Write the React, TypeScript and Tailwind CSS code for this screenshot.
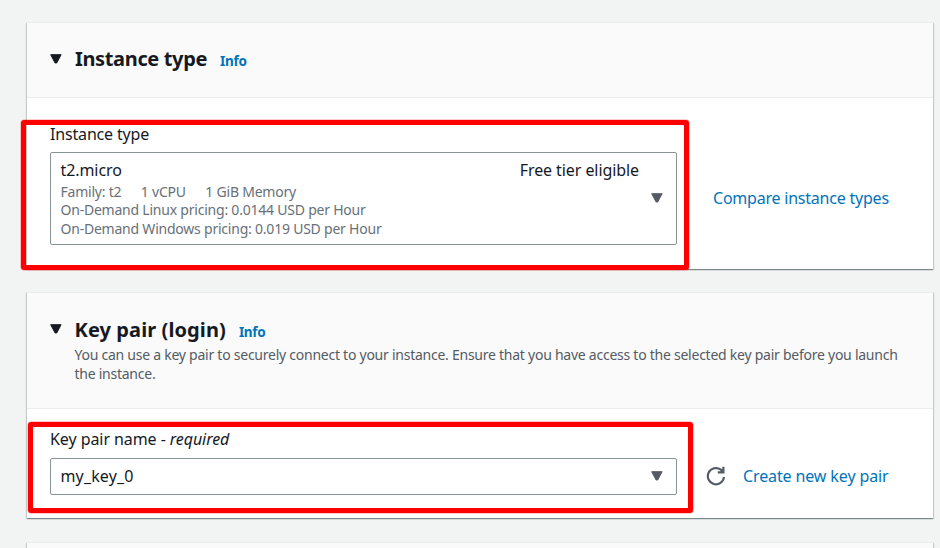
import React from "react";

const Caret = ({ className = "" }: { className?: string }) => (
  <svg viewBox="0 0 12 10" className={`h-[10px] w-[12px] shrink-0 ${className}`}>
    <path d="M0.7 0.7h10.4L6.7 9H5.1z" fill="currentColor" stroke="currentColor" strokeWidth="1" strokeLinejoin="round" />
  </svg>
);

const Info = ({ className = "" }: { className?: string }) => (
  <a className={`text-[13.5px] leading-5 font-bold tracking-[-0.3px] text-[#0073bb] ${className}`}>Info</a>
);

const card = "border-t border-[#eaeded] bg-white shadow-[0_1px_1px_0_rgba(0,28,36,0.3),1px_1px_1px_0_rgba(0,28,36,0.15),-1px_1px_1px_0_rgba(0,28,36,0.15)]";

const marker = "absolute rounded-[3px] border-[5px] border-[#ff0000] shadow-[0_0_0_0.5px_rgba(255,0,0,0.4)]";

export default function App() {
  return (
    <div className="relative h-[548px] w-[940px] overflow-hidden bg-[#f2f3f3] pt-[22px] pr-[7px] pl-[27px] font-['Noto_Sans',sans-serif] text-[16px] leading-[22px] text-[#16191f]">
      <section className={`h-[247px] ${card}`}>
        <header className="flex h-[75px] items-center border-b border-[#eaeded] bg-[#fafafa] pb-[2px] pl-[23px]">
          <Caret />
          <h2 className="mr-[13px] ml-[13px] text-[20px] font-bold tracking-[-0.35px]">Instance type</h2>
          <Info className="pt-[3px]" />
        </header>
        <div className="pt-[25px] pl-[23px]">
          <div className="tracking-[-0.17px]">Instance type</div>
          <div className="mt-[7px] flex items-center">
            <div className="flex h-[93px] w-[627px] items-center rounded-[2px] border border-[#879596] pr-[13px] pl-[9.5px]">
              <div className="w-[578.5px] text-[14px] leading-[19px] tracking-[-0.22px] text-[#687078]">
                <div className="mb-[1px] flex justify-between text-[16px] leading-[22px] tracking-[-0.08px] text-[#16191f]">
                  <span>t2.micro</span>
                  <span>Free tier eligible</span>
                </div>
                <div className="flex h-[18px] gap-[19.5px]">
                  <span>Family: t2</span>
                  <span>1 vCPU</span>
                  <span>1 GiB Memory</span>
                </div>
                <div>On-Demand Linux pricing: 0.0144 USD per Hour</div>
                <div>On-Demand Windows pricing: 0.019 USD per Hour</div>
              </div>
              <Caret className="mb-[1px] ml-auto text-[#545b64]" />
            </div>
            <a className="mb-[2px] ml-[36px] tracking-[-0.22px] text-[#0073bb]">Compare instance types</a>
          </div>
        </div>
      </section>

      <section className={`mt-[23px] h-[226px] ${card}`}>
        <header className="h-[116px] border-b border-[#eaeded] bg-[#fafafa] pt-[23px] pl-[23px]">
          <div className="flex h-[27px] items-center">
            <Caret className="mb-[1px]" />
            <h2 className="mr-[13px] ml-[12.5px] text-[20px] leading-[27px] font-bold tracking-[0.1px]">Key pair (login)</h2>
            <Info className="pt-[5px]" />
          </div>
          <p className="mt-[2px] ml-[24.5px] text-[14px] leading-[19px] tracking-[-0.25px] text-[#545b64]">
            You can use a key pair to securely connect to your instance. Ensure that you have access to the selected key pair before you launch<br />the instance.
          </p>
        </header>
        <div className="pt-[19px] pl-[23px]">
          <div className="tracking-[-0.07px]">Key pair name - <i>required</i></div>
          <div className="mt-[8px] flex items-center">
            <div className="flex h-[37px] w-[627px] items-center rounded-[2px] border border-[#879596] pr-[13px] pl-[9.5px]">
              <span className="mb-[2px] tracking-[0.15px]">my_key_0</span>
              <Caret className="mb-[1px] ml-auto text-[#545b64]" />
            </div>
            <svg viewBox="0 0 20 20" className="mb-[1px] ml-[29px] h-[20px] w-[20px]" fill="none" stroke="#545b64" strokeWidth="2.2">
              <path d="M18 11A8.1 8.1 0 1 1 14.8 3.7L17.3 6M17.4 0.8V6.4H11.8" />
            </svg>
            <a className="mb-[2px] ml-[17px] tracking-[-0.12px] text-[#0073bb]">Create new key pair</a>
          </div>
        </div>
      </section>
      <section className={`mt-[24px] h-[40px] ${card}`}>
        <header className="h-full bg-[#fafafa]" />
      </section>

      <div className={`top-[120px] left-[21px] h-[150px] w-[668px] ${marker}`} />
      <div className={`top-[422px] left-[28px] h-[91px] w-[665px] ${marker}`} />
    </div>
  );
}
